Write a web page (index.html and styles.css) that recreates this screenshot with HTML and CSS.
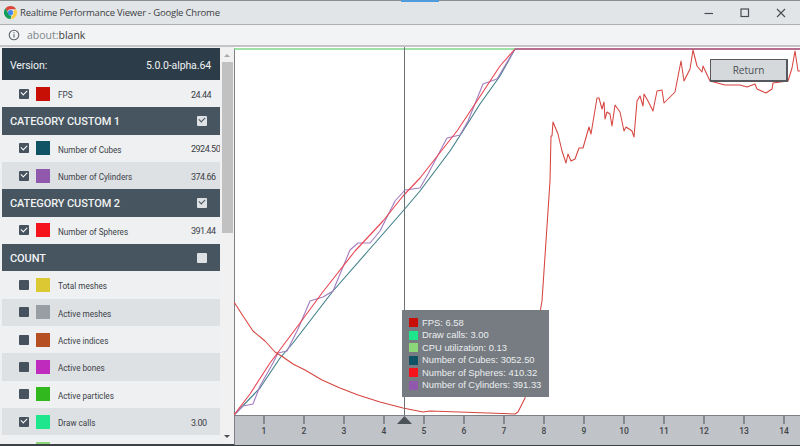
FILE: index.html
```html
<!DOCTYPE html>
<html lang="en">
<head>
<meta charset="utf-8">
<title>Realtime Performance Viewer</title>
<link rel="stylesheet" href="styles.css">
</head>
<body>
<div class="window">
  <span class="top-accent"></span>
  <header class="titlebar">
    <svg class="chrome-logo" viewBox="0 0 16 16" width="13" height="13">
      <path fill="#db4437" d="M8 0a8 8 0 0 1 6.93 4H8a4 4 0 0 0-3.8 2.8L1.8 2.9A8 8 0 0 1 8 0z"/>
      <path fill="#ffcd40" d="M14.93 4A8 8 0 0 1 8 16l3.4-5.9A4 4 0 0 0 11.4 5.9L14.93 4z"/>
      <path fill="#0f9d58" d="M8 16A8 8 0 0 1 1.8 2.9l3.5 6.2A3.9 3.9 0 0 0 9.2 11.8L8 16z"/>
      <circle cx="8" cy="8" r="3.2" fill="#4285f4"/>
    </svg>
    <span class="title-text">Realtime Performance Viewer - Google Chrome</span>
    <div class="win-controls">
      <svg width="12" height="12" viewBox="0 0 12 12"><path d="M1.5 6.5h8.5" stroke="#4a4d50" stroke-width="1.2"/></svg>
      <svg width="12" height="12" viewBox="0 0 12 12"><rect x="2" y="2" width="7.5" height="7.5" fill="none" stroke="#4a4d50" stroke-width="1.2"/></svg>
      <svg width="12" height="12" viewBox="0 0 12 12"><path d="M2 2l8 8M10 2l-8 8" stroke="#4a4d50" stroke-width="1.1"/></svg>
    </div>
  </header>
  <div class="addressbar">
    <svg width="12" height="12" viewBox="0 0 12 12"><circle cx="6" cy="6" r="4.8" fill="none" stroke="#5f6368" stroke-width="1.1"/><path d="M6 5.2v3.4M6 3.2v1.1" stroke="#5f6368" stroke-width="1.1"/></svg>
    <span class="url"><span class="url-scheme">about:</span>blank</span>
  </div>
  <main class="content">
    <aside class="sidebar">
      <div class="list">
        <div class="version"><span>Version:</span><span>5.0.0-alpha.64</span></div>

        <div class="row"><span class="cb on"></span><span class="sw c-fps"></span><span class="name">FPS</span><span class="val">24.44</span></div>

        <div class="cat"><span class="cat-name">CATEGORY CUSTOM 1</span><span class="cb-head on"></span></div>
        <div class="row"><span class="cb on"></span><span class="sw c-cubes"></span><span class="name">Number of Cubes</span><span class="val">2924.50</span></div>
        <div class="row alt"><span class="cb on"></span><span class="sw c-cyl"></span><span class="name">Number of Cylinders</span><span class="val">374.66</span></div>

        <div class="cat"><span class="cat-name">CATEGORY CUSTOM 2</span><span class="cb-head on"></span></div>
        <div class="row"><span class="cb on"></span><span class="sw c-sph"></span><span class="name">Number of Spheres</span><span class="val">391.44</span></div>

        <div class="cat"><span class="cat-name">COUNT</span><span class="cb-head"></span></div>
        <div class="row"><span class="cb"></span><span class="sw c-total"></span><span class="name">Total meshes</span></div>
        <div class="row alt"><span class="cb"></span><span class="sw c-meshes"></span><span class="name">Active meshes</span></div>
        <div class="row"><span class="cb"></span><span class="sw c-ind"></span><span class="name">Active indices</span></div>
        <div class="row alt"><span class="cb"></span><span class="sw c-bones"></span><span class="name">Active bones</span></div>
        <div class="row"><span class="cb"></span><span class="sw c-part"></span><span class="name">Active particles</span></div>
        <div class="row alt"><span class="cb on"></span><span class="sw c-draw"></span><span class="name">Draw calls</span><span class="val">3.00</span></div>
        <div class="row"><span class="cb on"></span><span class="sw c-cpu"></span></div>
      </div>
      <div class="scrollbar">
        <span class="arrow-up"></span>
        <span class="thumb"></span>
        <span class="arrow-down"></span>
      </div>
    </aside>
    <section class="chart">
      <svg class="plot" viewBox="234 46 566 398" width="566" height="398">
        <rect class="axis-bg" x="234" y="414" width="566" height="30"/>
        <path class="edge" d="M234.5 47V444M234 414.5H800"/>
        <path class="line-green" d="M234 48H515"/>
        <path class="line-top" d="M515 48H800"/>
        <polyline class="line-cubes" points="234,414 260,387 280,357 293,342 333,290 368,250 403,210 420,190 450,150 463,130 480,103 500,75 515,48"/>
        <polyline class="line-cyl" points="234,414 243,405 253,403 260,385 273,362 278,352 287,350 298,328 310,300 323,296 333,290 350,249 358,242 370,242 380,230 395,200 405,189 420,187 428,173 447,137 460,134 468,120 483,83 497,78 515,48"/>
        <polyline class="line-sph" points="234,414 250,393 270,362 300,322 322,292 355,250 383,220 403,195 420,177 457,130 477,100 500,65 515,48"/>
        <polyline class="line-fps" points="234,301 243,315 253,330 265,340 275,351 283,356 293,363 305,369 322,379 340,387 358,394 380,401 403,407 423,411 430,410 515,413 518,411 525,397 532,357 542,300 550,180 551,135 552,135 553,121 558,133 562,150 566,162 568,153 571,160 575,158 579,147 583,147 589,126 591,133 597,97 599,97 602,108 604,101 605,118 607,111 610,113 612,125 615,104 620,111 624,130 626,126 632,130 634,136 637,100 640,95 643,105 644,93 648,100 653,110 657,90 662,89 664,102 675,91 681,60 684,80 690,68 693,49 697,65 702,71 703,65 710,80 725,84 740,84 747,86 755,83 757,88 766,92 772,88 773,82 788,80 792,67 795,50 798,70 800,70"/>
        <path class="cursor" d="M404.5 46V414"/>
        <path class="marker" d="M397 423L404.5 415L412 423Z"/>
        <g class="ticks">
          <path d="M264 415v8M304 415v8M344 415v8M384 415v8M424 415v8M464 415v8M504 415v8M544 415v8M584 415v8M624 415v8M664 415v8M704 415v8M744 415v8M784 415v8"/>
        </g>
        <g class="tick-labels">
          <text x="264" y="433">1</text><text x="304" y="433">2</text><text x="344" y="433">3</text><text x="384" y="433">4</text><text x="424" y="433">5</text><text x="464" y="433">6</text><text x="504" y="433">7</text><text x="544" y="433">8</text><text x="584" y="433">9</text><text x="624" y="433">10</text><text x="664" y="433">11</text><text x="704" y="433">12</text><text x="744" y="433">13</text><text x="784" y="433">14</text>
        </g>
      </svg>
      <button class="return" type="button">Return</button>
      <div class="tooltip">
        <div class="tip-row"><span class="tip-sw c-fps"></span>FPS: 6.58</div>
        <div class="tip-row"><span class="tip-sw c-draw"></span>Draw calls: 3.00</div>
        <div class="tip-row"><span class="tip-sw c-cpu"></span>CPU utilization: 0.13</div>
        <div class="tip-row"><span class="tip-sw c-cubes"></span>Number of Cubes: 3052.50</div>
        <div class="tip-row"><span class="tip-sw c-sph"></span>Number of Spheres: 410.32</div>
        <div class="tip-row"><span class="tip-sw c-cyl"></span>Number of Cylinders: 391.33</div>
      </div>
    </section>
  </main>
</div>
</body>
</html>
```

FILE: styles.css
```css
* { box-sizing: border-box; }
html, body { margin: 0; padding: 0; }
body { width: 800px; height: 446px; overflow: hidden; background: #3d4246; }
.window {
  width: 800px; height: 444px;
  display: flex; flex-direction: column;
  border-top: 1px solid #8b8d8f;
  background: #eef0f2;
  font-family: Roboto, "Liberation Sans", sans-serif;
  position: relative;
}
.top-accent {
  position: absolute; left: 401px; top: -1px;
  width: 38px; height: 2px;
  background: #4f9bdc;
}
.titlebar {
  height: 24px; flex: none;
  display: flex; align-items: center;
  padding-left: 4px;
  background: #e2e5e8;
  border-bottom: 1px solid #aeb0b3;
  color: #3c4043;
}
.chrome-logo { flex: none; }
.title-text { margin-left: 3px; font: 9.5px "Open Sans", "Liberation Sans", sans-serif; letter-spacing: -0.2px; }
.win-controls { margin-left: auto; display: flex; gap: 24px; padding-right: 13px; align-items: center; }
.addressbar {
  height: 22px; flex: none;
  display: flex; align-items: center;
  padding-left: 8px; gap: 7px;
  background: #f1f3f4;
  border-bottom: 2px solid #c6c3c6;
}
.url { font: 10.5px "Open Sans", "Liberation Sans", sans-serif; color: #3c4043; }
.url-scheme { color: #80868b; }
.content { flex: 1; min-height: 0; display: flex; }
.sidebar {
  width: 234px; flex: none;
  display: flex;
  padding-left: 2px;
  padding-top: 1px;
  background: #eef0f2;
  overflow: hidden;
}
.list { width: 218px; flex: none; overflow: hidden; }
.version, .cat {
  display: flex; justify-content: space-between; align-items: center;
  color: #f0f2f3;
}
.version {
  height: 32px; padding: 2px 9px 0 8px;
  background: #2c3d49;
  font-size: 10.5px; font-weight: 400;
  letter-spacing: -0.1px;
}
.cat {
  height: 27.33px; padding: 0 13px 0 8px;
  background: #46555f;
  font-size: 11px; font-weight: 500;
}
.cat-name { padding-top: 2px; letter-spacing: -0.1px; }
.cb-head { width: 10px; height: 10px; border-radius: 1px; background: #dfe2e5; position: relative; }
.cb-head.on::after, .cb.on::after {
  content: ""; position: absolute; left: 2px; top: 1.5px;
  width: 5px; height: 3px;
  border-left: 1.4px solid #46555f; border-bottom: 1.4px solid #46555f;
  transform: rotate(-45deg);
}
.cb.on::after { border-color: #fff; }
.row {
  height: 27.33px;
  display: flex; align-items: center;
  padding-left: 17px;
  background: #eef0f2;
  color: #3b4046;
  font-size: 9.6px;
}
.row.alt { background: #dee1e4; }
.cb { width: 10px; height: 10px; flex: none; border-radius: 1px; background: #46535f; position: relative; }
.sw { width: 14px; height: 14px; flex: none; margin-left: 7px; }
.name { margin-left: 8px; width: 133px; flex: none; white-space: nowrap; padding-top: 2px; transform: scaleX(0.85); transform-origin: left center; }
.val { white-space: nowrap; padding-top: 2px; font-size: 9px; letter-spacing: -0.5px; }
.c-fps { background: #c80f05; }
.c-cubes { background: #0f5364; }
.c-cyl { background: #9059ae; }
.c-sph { background: #f5141c; }
.c-total { background: #dcc832; }
.c-meshes { background: #979fa5; }
.c-ind { background: #b64f22; }
.c-bones { background: #bf2bbd; }
.c-part { background: #32b81f; }
.c-draw { background: #1ee68c; }
.c-cpu { background: #8cd878; }
.scrollbar {
  width: 14px; flex: none;
  display: flex; flex-direction: column; align-items: center;
  background: #f1f1f1;
}
.arrow-up, .arrow-down { width: 0; height: 0; border-left: 3px solid transparent; border-right: 3px solid transparent; }
.arrow-up { margin-top: 6px; border-bottom: 3px solid #a8a8a8; }
.thumb { width: 11px; height: 171px; margin-top: 5px; background: #c1c1c1; }
.arrow-down { margin-top: auto; margin-bottom: 6px; border-top: 3px solid #4a4f54; }
.chart { flex: 1; min-width: 0; position: relative; background: #fff; }
.plot { display: block; }
.axis-bg { fill: #c0c3c8; }
.edge { fill: none; stroke: #7d8185; stroke-width: 1; }
.plot polyline, .plot .line-green, .plot .line-top { fill: none; stroke-linejoin: round; }
.line-green { stroke: #7fd88a; stroke-width: 1.3; }
.line-top { stroke: #a03e68; stroke-width: 1.4; }
.line-cubes { stroke: #3f7f88; stroke-width: 1.1; }
.line-cyl { stroke: #a27cc0; stroke-width: 1.1; }
.line-sph { stroke: #e84553; stroke-width: 1.1; }
.line-fps { stroke: #d6443f; stroke-width: 1.05; }
.cursor { stroke: #6c7176; stroke-width: 1; }
.marker { fill: #4c5358; }
.ticks path { stroke: #4c5358; stroke-width: 1; fill: none; }
.tick-labels text { font: 500 8.5px Roboto, "Liberation Sans", sans-serif; fill: #3f4448; text-anchor: middle; }
.return {
  position: absolute; left: 476px; top: 12px;
  width: 78px; height: 23px;
  padding: 0;
  background: #d6d9dc;
  color: #4a4f54;
  font: 10px "Open Sans", "Liberation Sans", sans-serif;
  border: 1px solid #55595d;
  border-bottom-width: 2px;
  border-right-width: 2px;
}
.tooltip {
  position: absolute; left: 168px; top: 263px;
  width: 147px; height: 87px;
  padding: 6.5px 0 0 7px;
  background: #767c82;
  color: #eceef0;
  font: 9.4px/12.5px "Liberation Sans", sans-serif;
}
.tip-row { display: flex; align-items: center; white-space: nowrap; height: 12.5px; }
.tip-sw { width: 9px; height: 9px; flex: none; margin-right: 4px; }
```
